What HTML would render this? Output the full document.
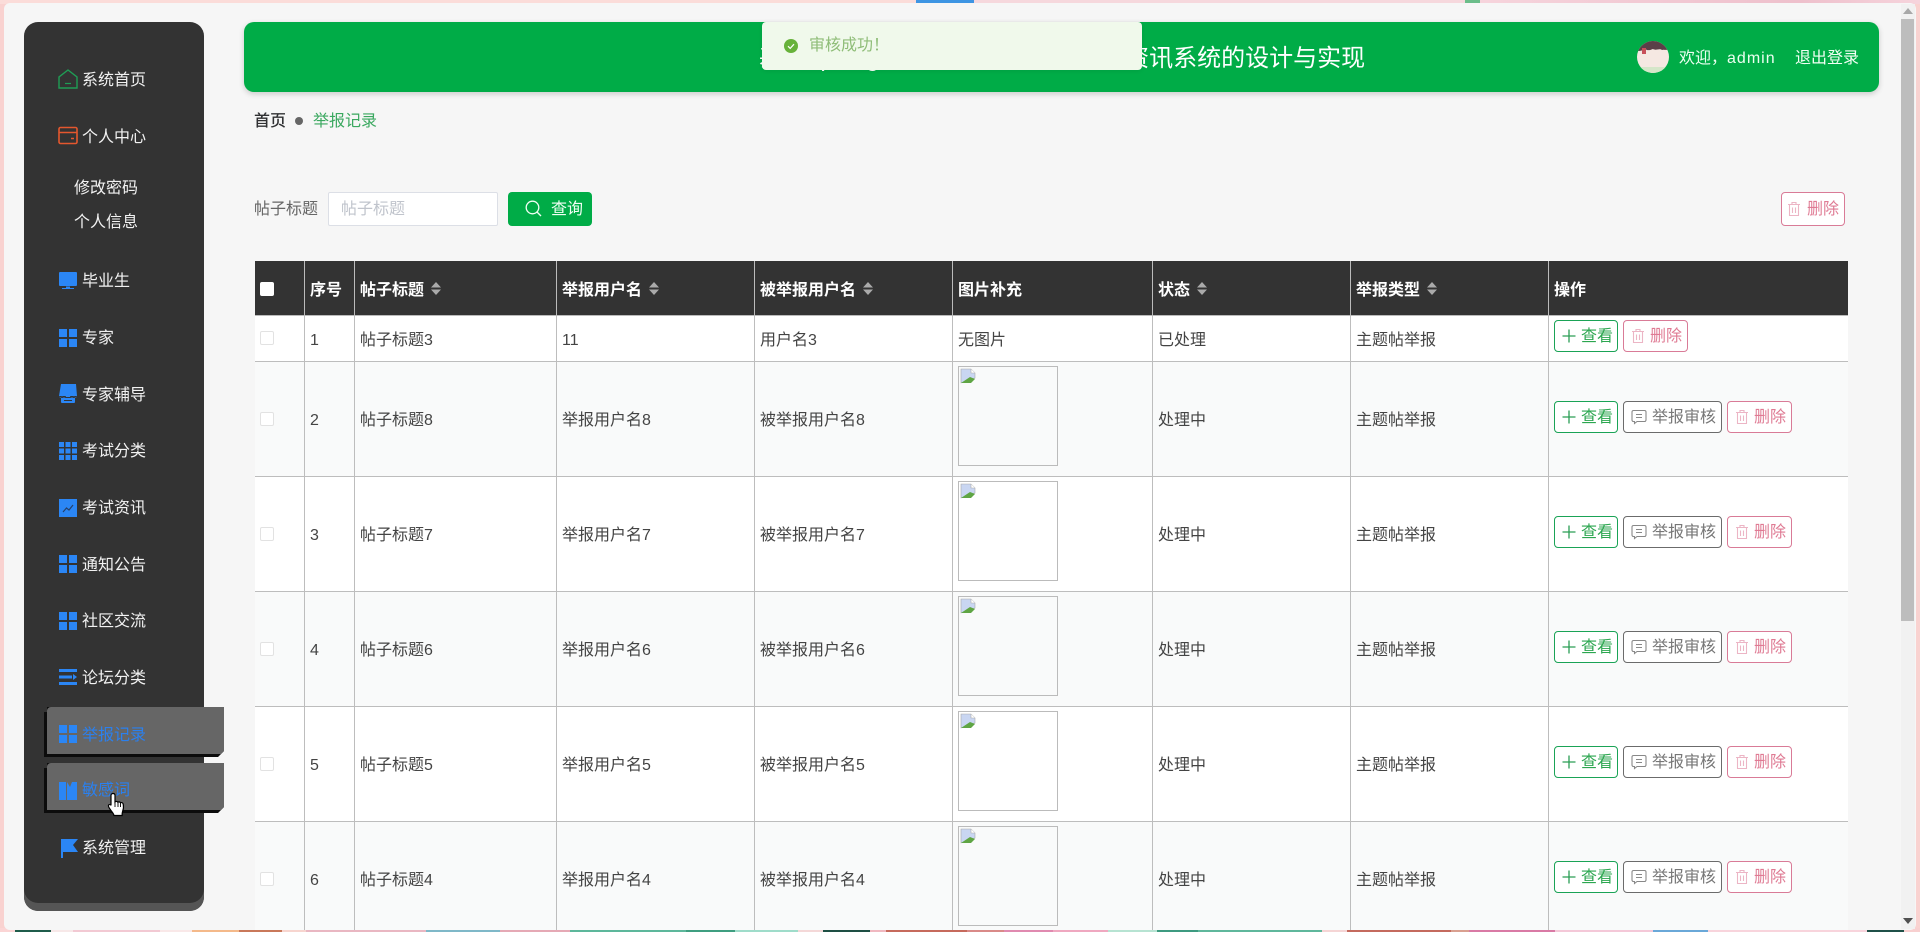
<!DOCTYPE html>
<html lang="zh"><head><meta charset="utf-8"><title>举报记录</title>
<style>
*{box-sizing:border-box}
html,body{margin:0;padding:0;width:1920px;height:932px;overflow:hidden;background:#f9d2d0}
body{font-family:"Liberation Sans","Noto Sans CJK SC",sans-serif;font-size:16px;color:#444}
.abs,.t,.i{position:absolute}
#top{position:absolute;left:0;top:0;width:1920px;height:4px;background:linear-gradient(90deg,#fbdcd9 0,#fbdcd9 916px,#3e95e3 916px,#3e95e3 974px,#f6d8dd 974px,#f6d8dd 1465px,#6bbd8a 1465px,#6bbd8a 1480px,#f6d4dc 1480px,#eec0cc 1800px,#f6d4dc 1920px)}
#bot{position:absolute;left:0;top:928px;width:1920px;height:4px;background:linear-gradient(90deg,#fbd5d5 0 15px,#1f5c4b 15px 51px,#f7e8e8 51px 73px,#f2c9d3 73px 160px,#f9e8e8 160px 192px,#f4b98a 192px 239px,#c9785a 239px 282px,#f7d5cf 282px 306px,#e9b7c2 306px 426px,#7fb8c8 426px 500px,#e5a9b5 500px 570px,#5db79b 570px 686px,#3f9e80 686px 735px,#9fdcca 735px 798px,#f4d8d8 798px 823px,#1e4f44 823px 870px,#f0b8c0 870px 886px,#c66a5c 886px 967px,#d98a88 967px 1004px,#e08ab0 1004px 1053px,#efa8c0 1053px 1108px,#b7e3d2 1108px 1157px,#3d9a80 1157px 1198px,#5fb79c 1198px 1322px,#f5d5d5 1322px 1347px,#c46a5e 1347px 1451px,#d9a090 1451px 1469px,#d97aa5 1469px 1555px,#f4c8d8 1555px 1653px,#6aa8d8 1653px 1708px,#f8d4dc 1708px 1867px,#1f5048 1867px 1904px,#f8d0d0 1904px)}
#page{position:absolute;left:4px;top:3px;width:1912px;height:927px;background:#f6f6f6;border-radius:6px;overflow:hidden}
#wrap{position:absolute;left:0;top:0;width:1920px;height:930px;overflow:hidden}
#sb{position:absolute;left:1901px;top:4px;width:14px;height:925px;background:#f1f1f1}
#th{position:absolute;left:1901px;top:19px;width:13px;height:602px;background:#bdbdbd}
#side{position:absolute;left:24px;top:22px;width:180px;height:889px;background:#333;border-radius:14px;box-shadow:inset 0 -8px 0 #555}
.m{position:absolute;left:82px;color:#f2f2f2;line-height:24px;height:24px;white-space:nowrap;margin-top:2px}
.i{left:58px;width:20px;height:20px;margin-top:1px}
.act{position:absolute;left:44px;width:180px;height:50px;background:#0c0c0c;clip-path:polygon(3px 5px,3px 0,180px 0,180px 44px,174px 50px,0 50px,0 5px)}
.act div{position:absolute;left:3px;top:0;width:177px;height:47px;background:#666;border-radius:4px 0 0 0;clip-path:polygon(0 0,100% 0,100% 44px,174px 47px,0 47px)}
#hd{position:absolute;left:244px;top:22px;width:1635px;height:70px;background:#00ac47;border-radius:10px;box-shadow:0 2px 6px rgba(0,0,0,.18)}
#title{position:absolute;left:759px;top:41px;font-size:24px;line-height:36px;color:#fff;white-space:nowrap}
#title span{letter-spacing:1.4px}
#toast{position:absolute;left:762px;top:22px;width:380px;height:48px;background:#f0f9eb;border-radius:4px;box-shadow:0 1px 4px rgba(0,0,0,.08)}
table{position:absolute;left:255px;top:261px;width:1593px;border-collapse:separate;border-spacing:0;table-layout:fixed;line-height:24px}
th{background:#333;color:#fff;text-align:left;font-weight:bold;height:55px;padding:5px 5px 0;border-right:1px solid #bbb;border-bottom:1px solid #bbb;white-space:nowrap;position:relative}
td{height:115px;padding:3px 5px 0;border-right:1px solid #bdbdbd;border-bottom:1px solid #bdbdbd;color:#444;white-space:nowrap;position:relative;vertical-align:middle}
tr.a td{background:#fff}
tr.z td{background:#f9fafa}
tr.f td{height:46px;padding-top:5px}
th:last-child,td:last-child{border-right:0}
.cb{display:block;width:14px;height:14px;background:#fff;border:1px solid #e2e2e2;border-radius:2px;margin-left:0}
tr.z .cb,tr.a .cb{position:relative;top:-2px}
tr.f .cb{top:-3px}
th .cb{border:0;background:#fff;position:relative;top:-2px}
.s{display:inline-block;vertical-align:0;margin-left:7px;width:10px;height:13px}
.ph{display:block;position:absolute;left:5px;top:4px;width:100px;height:100px;border:1px solid #bbb}
.ph svg{position:absolute;left:1px;top:1px}
.o{position:absolute;left:5px;top:39px;height:32px;white-space:nowrap;font-size:0}
tr.f .o{top:4px}
.b{display:inline-block;position:relative;height:32px;line-height:32px;font-size:16px;border:1px solid;border-radius:4px;background:#fff;margin-right:5px;vertical-align:top}
.b svg{position:absolute;top:7px}
.v{width:64px;border-color:#1aa356;color:#2ba64f;padding-left:26px}
.c{width:99px;border-color:#6b6b6b;color:#777;padding-left:28px}
.d{width:65px;border-color:#d97b97;color:#df7a93;padding-left:26px}
</style></head><body>
<div id="top"></div><div id="bot"></div>
<div id="page"></div>
<div id="wrap">
<div id="sb"></div><div id="th"></div>
<svg class="abs" style="left:1903px;top:8px" width="10" height="6"><path d="M5 0L10 6H0Z" fill="#a8a8a8"/></svg>
<svg class="abs" style="left:1903px;top:918px" width="10" height="6"><path d="M0 0H10L5 6Z" fill="#505050"/></svg>

<div id="side"></div>
<svg class="i" style="top:68px" viewBox="0 0 20 20" fill="none" stroke="#1f9d55" stroke-width="1.4"><path d="M10 1L19 8V19H1V8Z"/><path d="M7 14.5h6" stroke-width="1.2"/></svg>
<div class="m" style="top:67px">系统首页</div>
<svg class="i" style="top:125px" viewBox="0 0 20 20" fill="none" stroke="#e4572e" stroke-width="1.6"><rect x="1" y="1.5" width="18" height="16" rx="1.5"/><path d="M1 6.5h18M13 12.500h3"/></svg>
<div class="m" style="top:124px">个人中心</div>
<div class="m" style="top:175px;left:74px">修改密码</div>
<div class="m" style="top:209px;left:74px">个人信息</div>
<svg class="i" style="top:270px" viewBox="0 0 20 20" fill="#2b86f5"><path d="M2 1h16a1 1 0 0 1 1 1v12a1 1 0 0 1-1 1H2a1 1 0 0 1-1-1V2a1 1 0 0 1 1-1z"/><path d="M8 15.5h4v1.5h4v1H4v-1h4z"/></svg>
<div class="m" style="top:268px">毕业生</div>
<svg class="i" style="top:327px" viewBox="0 0 20 20" fill="#2b86f5"><rect x="1" y="1" width="8" height="8"/><rect x="11" y="1" width="8" height="8"/><rect x="1" y="11" width="8" height="8"/><rect x="11" y="11" width="8" height="8"/></svg>
<div class="m" style="top:325px">专家</div>
<svg class="i" style="top:383px" viewBox="0 0 20 20" fill="#2b86f5"><path d="M3 0h15l1 12H1z"/><path d="M1 12c0 2 3 2 3 0 0 2 4 2 4 0h4c0 2 4 2 4 0 0 2 3 2 3 0v1H1z"/><path d="M3 14h14v4a1 1 0 0 1-1 1H4a1 1 0 0 1-1-1zM6 16v1h8v-1z" fill-rule="evenodd"/></svg>
<div class="m" style="top:382px">专家辅导</div>
<svg class="i" style="top:440px" viewBox="0 0 20 20" fill="#2b86f5"><rect x="1" y="1" width="5" height="5"/><rect x="7.5" y="1" width="5" height="5"/><rect x="14" y="1" width="5" height="5"/><rect x="1" y="7.5" width="5" height="5"/><rect x="7.5" y="7.5" width="5" height="5"/><rect x="14" y="7.5" width="5" height="5"/><rect x="1" y="14" width="5" height="5"/><rect x="7.5" y="14" width="5" height="5"/><rect x="14" y="14" width="5" height="5"/></svg>
<div class="m" style="top:438px">考试分类</div>
<svg class="i" style="top:497px" viewBox="0 0 20 20"><rect x="1" y="1" width="18" height="18" fill="#2b86f5"/><path d="M5 14l3.5-4 2.5 2 4-5" fill="none" stroke="#25406b" stroke-width="1.2"/></svg>
<div class="m" style="top:495px">考试资讯</div>
<svg class="i" style="top:553px" viewBox="0 0 20 20" fill="#2b86f5"><rect x="1" y="1" width="8" height="8"/><rect x="11" y="1" width="8" height="8"/><rect x="1" y="11" width="8" height="8"/><rect x="11" y="11" width="8" height="8"/></svg>
<div class="m" style="top:552px">通知公告</div>
<svg class="i" style="top:610px" viewBox="0 0 20 20" fill="#2b86f5"><rect x="1" y="1" width="8" height="8"/><rect x="11" y="1" width="8" height="8"/><rect x="1" y="11" width="8" height="8"/><rect x="11" y="11" width="8" height="8"/></svg>
<div class="m" style="top:608px">社区交流</div>
<svg class="i" style="top:666px" viewBox="0 0 20 20" fill="#2b86f5"><rect x="1" y="2" width="18" height="3"/><rect x="1" y="15" width="18" height="3"/><rect x="1" y="8.5" width="13" height="3"/><path d="M15 7l4 3-4 3z"/></svg>
<div class="m" style="top:665px">论坛分类</div>

<div class="act" style="top:707px"><div></div></div>
<svg class="i" style="top:723px" viewBox="0 0 20 20" fill="#2b86f5"><rect x="1" y="1" width="8" height="8"/><rect x="11" y="1" width="8" height="8"/><rect x="1" y="11" width="8" height="8"/><rect x="11" y="11" width="8" height="8"/></svg>
<div class="m" style="top:722px;color:#2b80ee">举报记录</div>
<div class="act" style="top:763px"><div></div></div>
<svg class="i" style="top:780px" viewBox="0 0 20 20" fill="#2b86f5"><path d="M1 1h7v18H1zM9 1l3 5 2-5h5v18H9z"/></svg>
<div class="m" style="top:777px;color:#2b80ee">敏感词</div>
<svg class="i" style="top:837px" viewBox="0 0 20 20" fill="#2b86f5"><path d="M3 1h2v19H3z"/><path d="M5 1h15l-5 6 5 7H5z"/></svg>
<div class="m" style="top:835px">系统管理</div>
<svg class="abs" style="left:107px;top:792px" width="20" height="25" viewBox="0 0 20 25"><path d="M6 1.5c1.2 0 2 .8 2 2V10c.8-.8 2.2-.8 2.8.2.8-.6 2.2-.4 2.7.6.8-.5 2.3-.2 2.6 1 .5 2 .4 5-.4 7.2-.4 1.2-.6 3-.6 4.5H7c-.4-2-2-3.5-3.4-5.5C2.500 16.500 1 14.500 1.500 13.200c.5-1 2-.8 2.500.2V3.500c0-1.200.8-2 2-2z" fill="#fff" stroke="#000" stroke-width="1.2"/><path d="M8 10v5M11 10v5M13.500 11v4" stroke="#000" stroke-width=".9"/></svg>

<div id="hd"></div>
<div id="title">基于<span>springboot</span>的高校毕业生考试资讯系统的设计与实现</div>
<svg class="abs" style="left:1637px;top:41px" width="32" height="32" viewBox="0 0 32 32"><defs><clipPath id="av"><circle cx="16" cy="16" r="16"/></clipPath></defs><g clip-path="url(#av)"><rect width="32" height="32" fill="#f5e8e2"/><path d="M0 0h32v8c-3 2-5 0-7 1-3-2-6 1-9-1-3 1-5 2-8 0-3 2-6 2-8 2z" fill="#5a4048"/><rect x="5" y="7" width="4" height="6" fill="#c8505a"/><path d="M0 26h32v6H0z" fill="#d5e6c9"/></g></svg>
<div class="m" style="left:1679px;top:45px;color:#eafff0">欢迎，<span style="letter-spacing:1px">admin</span></div>
<div class="m" style="left:1795px;top:45px;color:#f2fff5">退出登录</div>

<div id="toast"></div>
<svg class="abs" style="left:784px;top:39px" width="14" height="14" viewBox="0 0 14 14"><circle cx="7" cy="7" r="7" fill="#67b23a"/><path d="M4 7.200l2.200 2.200L10 5.200" fill="none" stroke="#fff" stroke-width="1.200"/></svg>
<div class="m" style="left:809px;top:32px;color:#8fbd78">审核成功！</div>

<div class="m" style="left:254px;top:108px;color:#303133;font-weight:500">首页</div>
<div class="abs" style="left:295px;top:117px;width:8px;height:8px;border-radius:50%;background:#666"></div>
<div class="m" style="left:313px;top:108px;color:#3aa85f">举报记录</div>

<div class="m" style="left:254px;top:196px;color:#666">帖子标题</div>
<div class="abs" style="left:328px;top:192px;width:170px;height:34px;background:#fff;border:1px solid #dcdfe6;border-radius:2px"></div>
<div class="m" style="left:341px;top:196px;color:#c0c4cc">帖子标题</div>
<div class="abs" style="left:508px;top:192px;width:84px;height:34px;background:#00ac47;border-radius:4px"></div>
<svg class="abs" style="left:525px;top:200px" width="17" height="17" viewBox="0 0 17 17" fill="none" stroke="#f2fff5" stroke-width="1.300"><circle cx="7.500" cy="7.500" r="6.300"/><path d="M12 12l4 4"/></svg>
<div class="m" style="left:551px;top:196px;color:#f2fff5">查询</div>
<div class="abs" style="left:1781px;top:192px;width:64px;height:34px;background:#fff;border:1px solid #d97b97;border-radius:4px"></div>
<svg class="abs" style="left:1787px;top:201px" width="14" height="16" viewBox="0 0 14 16" fill="none" stroke="#ecb5c5" stroke-width="1.100"><path d="M1 3.500h12M5 3.500V1.500h4v2M2.500 3.500v11h9v-11M5.500 6.500v5.500M8.500 6.500v5.500"/></svg>
<div class="m" style="left:1807px;top:196px;color:#df7a93">删除</div>

<table>
<colgroup><col style="width:50px"><col style="width:50px"><col style="width:202px"><col style="width:198px"><col style="width:198px"><col style="width:200px"><col style="width:198px"><col style="width:198px"><col style="width:299px"></colgroup>
<tr><th><span class="cb" style="margin-left:0"></span></th><th>序号</th>
<th>帖子标题<svg class="s" viewBox="0 0 10 13" fill="#aaa"><path d="M5 0l5 5.500H0zM0 7.500h10L5 13z"/></svg></th>
<th>举报用户名<svg class="s" viewBox="0 0 10 13" fill="#aaa"><path d="M5 0l5 5.500H0zM0 7.500h10L5 13z"/></svg></th>
<th>被举报用户名<svg class="s" viewBox="0 0 10 13" fill="#aaa"><path d="M5 0l5 5.500H0zM0 7.500h10L5 13z"/></svg></th>
<th>图片补充</th>
<th>状态<svg class="s" viewBox="0 0 10 13" fill="#aaa"><path d="M5 0l5 5.500H0zM0 7.500h10L5 13z"/></svg></th>
<th>举报类型<svg class="s" viewBox="0 0 10 13" fill="#aaa"><path d="M5 0l5 5.500H0zM0 7.500h10L5 13z"/></svg></th>
<th>操作</th></tr>

<tr class="a f"><td><span class="cb"></span></td><td>1</td><td>帖子标题3</td><td>11</td><td>用户名3</td><td>无图片</td><td>已处理</td><td>主题帖举报</td>
<td><div class="o"><span class="b v"><svg style="left:6px" width="16" height="16" viewBox="0 0 16 16" fill="none" stroke="#2a9d55" stroke-width="1.300"><path d="M8 1.500v13M1.500 8h13"/></svg>查看</span><span class="b d"><svg style="left:7px" width="14" height="16" viewBox="0 0 14 16" fill="none" stroke="#ecb5c5" stroke-width="1.100"><path d="M1 3.500h12M5 3.500V1.500h4v2M2.500 3.500v11h9v-11M5.500 6.500v5.500M8.500 6.500v5.500"/></svg>删除</span></div></td></tr>

<tr class="z"><td><span class="cb"></span></td><td>2</td><td>帖子标题8</td><td>举报用户名8</td><td>被举报用户名8</td><td><span class="ph"><svg width="16" height="16" viewBox="0 0 16 16"><path d="M1 1h10l4 4v5L1 15z" fill="#c9d6f2" stroke="#a8a8a8" stroke-width=".6"/><path d="M1 15l9-6 5 2-4 4z" fill="#5fa544"/><path d="M11 1v4h4" fill="#fff" stroke="#aaa" stroke-width=".6"/></svg></span></td><td>处理中</td><td>主题帖举报</td>
<td><div class="o"><span class="b v"><svg style="left:6px" width="16" height="16" viewBox="0 0 16 16" fill="none" stroke="#2a9d55" stroke-width="1.300"><path d="M8 1.500v13M1.500 8h13"/></svg>查看</span><span class="b c"><svg style="left:7px" width="16" height="16" viewBox="0 0 16 16" fill="none" stroke="#888" stroke-width="1.100"><path d="M2.500 1.500h11a1.500 1.500 0 0 1 1.500 1.500v8a1.500 1.500 0 0 1-1.500 1.500H6l-2.500 2v-2h-1A1.500 1.500 0 0 1 1 11V3a1.500 1.500 0 0 1 1.500-1.500zM5 5.500h6M5 8.500h6"/></svg>举报审核</span><span class="b d"><svg style="left:7px" width="14" height="16" viewBox="0 0 14 16" fill="none" stroke="#ecb5c5" stroke-width="1.100"><path d="M1 3.500h12M5 3.500V1.500h4v2M2.500 3.500v11h9v-11M5.500 6.500v5.500M8.500 6.500v5.500"/></svg>删除</span></div></td></tr>

<tr class="a"><td><span class="cb"></span></td><td>3</td><td>帖子标题7</td><td>举报用户名7</td><td>被举报用户名7</td><td><span class="ph"><svg width="16" height="16" viewBox="0 0 16 16"><path d="M1 1h10l4 4v5L1 15z" fill="#c9d6f2" stroke="#a8a8a8" stroke-width=".6"/><path d="M1 15l9-6 5 2-4 4z" fill="#5fa544"/><path d="M11 1v4h4" fill="#fff" stroke="#aaa" stroke-width=".6"/></svg></span></td><td>处理中</td><td>主题帖举报</td>
<td><div class="o"><span class="b v"><svg style="left:6px" width="16" height="16" viewBox="0 0 16 16" fill="none" stroke="#2a9d55" stroke-width="1.300"><path d="M8 1.500v13M1.500 8h13"/></svg>查看</span><span class="b c"><svg style="left:7px" width="16" height="16" viewBox="0 0 16 16" fill="none" stroke="#888" stroke-width="1.100"><path d="M2.500 1.500h11a1.500 1.500 0 0 1 1.500 1.500v8a1.500 1.500 0 0 1-1.500 1.500H6l-2.500 2v-2h-1A1.500 1.500 0 0 1 1 11V3a1.500 1.500 0 0 1 1.500-1.500zM5 5.500h6M5 8.500h6"/></svg>举报审核</span><span class="b d"><svg style="left:7px" width="14" height="16" viewBox="0 0 14 16" fill="none" stroke="#ecb5c5" stroke-width="1.100"><path d="M1 3.500h12M5 3.500V1.500h4v2M2.500 3.500v11h9v-11M5.500 6.500v5.500M8.500 6.500v5.500"/></svg>删除</span></div></td></tr>

<tr class="z"><td><span class="cb"></span></td><td>4</td><td>帖子标题6</td><td>举报用户名6</td><td>被举报用户名6</td><td><span class="ph"><svg width="16" height="16" viewBox="0 0 16 16"><path d="M1 1h10l4 4v5L1 15z" fill="#c9d6f2" stroke="#a8a8a8" stroke-width=".6"/><path d="M1 15l9-6 5 2-4 4z" fill="#5fa544"/><path d="M11 1v4h4" fill="#fff" stroke="#aaa" stroke-width=".6"/></svg></span></td><td>处理中</td><td>主题帖举报</td>
<td><div class="o"><span class="b v"><svg style="left:6px" width="16" height="16" viewBox="0 0 16 16" fill="none" stroke="#2a9d55" stroke-width="1.300"><path d="M8 1.500v13M1.500 8h13"/></svg>查看</span><span class="b c"><svg style="left:7px" width="16" height="16" viewBox="0 0 16 16" fill="none" stroke="#888" stroke-width="1.100"><path d="M2.500 1.500h11a1.500 1.500 0 0 1 1.500 1.500v8a1.500 1.500 0 0 1-1.500 1.500H6l-2.500 2v-2h-1A1.500 1.500 0 0 1 1 11V3a1.500 1.500 0 0 1 1.500-1.500zM5 5.500h6M5 8.500h6"/></svg>举报审核</span><span class="b d"><svg style="left:7px" width="14" height="16" viewBox="0 0 14 16" fill="none" stroke="#ecb5c5" stroke-width="1.100"><path d="M1 3.500h12M5 3.500V1.500h4v2M2.500 3.500v11h9v-11M5.500 6.500v5.500M8.500 6.500v5.500"/></svg>删除</span></div></td></tr>

<tr class="a"><td><span class="cb"></span></td><td>5</td><td>帖子标题5</td><td>举报用户名5</td><td>被举报用户名5</td><td><span class="ph"><svg width="16" height="16" viewBox="0 0 16 16"><path d="M1 1h10l4 4v5L1 15z" fill="#c9d6f2" stroke="#a8a8a8" stroke-width=".6"/><path d="M1 15l9-6 5 2-4 4z" fill="#5fa544"/><path d="M11 1v4h4" fill="#fff" stroke="#aaa" stroke-width=".6"/></svg></span></td><td>处理中</td><td>主题帖举报</td>
<td><div class="o"><span class="b v"><svg style="left:6px" width="16" height="16" viewBox="0 0 16 16" fill="none" stroke="#2a9d55" stroke-width="1.300"><path d="M8 1.500v13M1.500 8h13"/></svg>查看</span><span class="b c"><svg style="left:7px" width="16" height="16" viewBox="0 0 16 16" fill="none" stroke="#888" stroke-width="1.100"><path d="M2.500 1.500h11a1.500 1.500 0 0 1 1.500 1.500v8a1.500 1.500 0 0 1-1.500 1.500H6l-2.500 2v-2h-1A1.500 1.500 0 0 1 1 11V3a1.500 1.500 0 0 1 1.500-1.500zM5 5.500h6M5 8.500h6"/></svg>举报审核</span><span class="b d"><svg style="left:7px" width="14" height="16" viewBox="0 0 14 16" fill="none" stroke="#ecb5c5" stroke-width="1.100"><path d="M1 3.500h12M5 3.500V1.500h4v2M2.500 3.500v11h9v-11M5.500 6.500v5.500M8.500 6.500v5.500"/></svg>删除</span></div></td></tr>

<tr class="z"><td><span class="cb"></span></td><td>6</td><td>帖子标题4</td><td>举报用户名4</td><td>被举报用户名4</td><td><span class="ph"><svg width="16" height="16" viewBox="0 0 16 16"><path d="M1 1h10l4 4v5L1 15z" fill="#c9d6f2" stroke="#a8a8a8" stroke-width=".6"/><path d="M1 15l9-6 5 2-4 4z" fill="#5fa544"/><path d="M11 1v4h4" fill="#fff" stroke="#aaa" stroke-width=".6"/></svg></span></td><td>处理中</td><td>主题帖举报</td>
<td><div class="o"><span class="b v"><svg style="left:6px" width="16" height="16" viewBox="0 0 16 16" fill="none" stroke="#2a9d55" stroke-width="1.300"><path d="M8 1.500v13M1.500 8h13"/></svg>查看</span><span class="b c"><svg style="left:7px" width="16" height="16" viewBox="0 0 16 16" fill="none" stroke="#888" stroke-width="1.100"><path d="M2.500 1.500h11a1.500 1.500 0 0 1 1.500 1.500v8a1.500 1.500 0 0 1-1.500 1.500H6l-2.500 2v-2h-1A1.500 1.500 0 0 1 1 11V3a1.500 1.500 0 0 1 1.500-1.500zM5 5.500h6M5 8.500h6"/></svg>举报审核</span><span class="b d"><svg style="left:7px" width="14" height="16" viewBox="0 0 14 16" fill="none" stroke="#ecb5c5" stroke-width="1.100"><path d="M1 3.500h12M5 3.500V1.500h4v2M2.500 3.500v11h9v-11M5.500 6.500v5.500M8.500 6.500v5.500"/></svg>删除</span></div></td></tr>
</table>
</div>
</body></html>
